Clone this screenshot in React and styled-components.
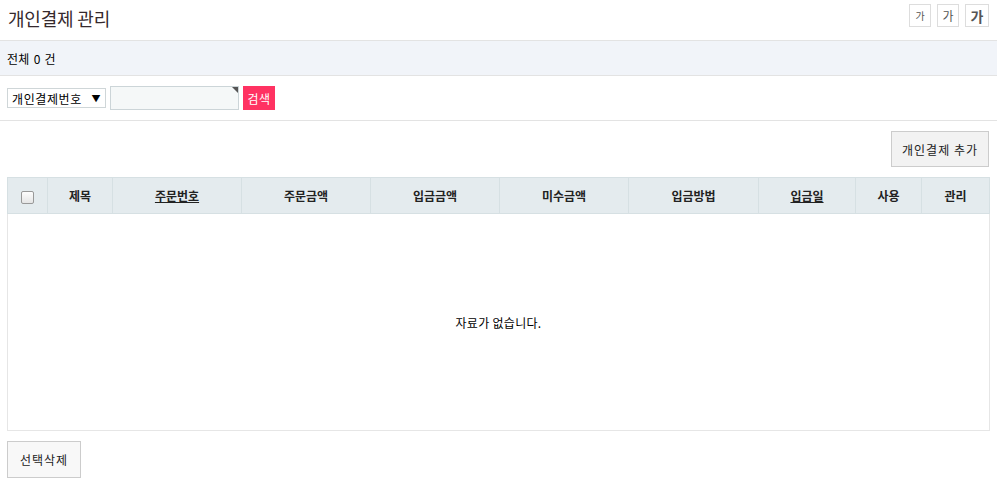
import React from "react";
import styled, { createGlobalStyle } from "styled-components";

const GlobalStyle = createGlobalStyle`
  html, body {
    margin: 0;
    padding: 0;
    background: #fff;
    font-family: "Noto Sans CJK KR", "Noto Sans", sans-serif;
    font-size: 12px;
    color: #000;
  }
`;

const Page = styled.div`
  width: 997px;
  display: flex;
  flex-direction: column;
`;

const TitleBar = styled.div`
  height: 41px;
  box-sizing: border-box;
  border-bottom: 1px solid #e3e3e3;
  display: flex;
  align-items: center;
  justify-content: space-between;
  padding: 0 8px 0 8px;
`;

const Title = styled.h1`
  margin: 0;
  font-size: 18px;
  font-weight: normal;
  color: #35292d;
  letter-spacing: -0.2px;
  line-height: 20px;
  margin-top: -4px;
`;

const SizeGroup = styled.div`
  display: flex;
  gap: 6px;
  align-self: flex-start;
  margin-top: 4px;
`;

const SizeButton = styled.button`
  width: ${p => p.w}px;
  height: 23px;
  padding: 0;
  border: 1px solid #ddd;
  background: #fff;
  color: #555;
  font-family: inherit;
  font-size: ${p => p.fs}px;
  font-weight: ${p => (p.bold ? 600 : "normal")};
  display: flex;
  align-items: center;
  justify-content: center;
`;

const TotalBar = styled.div`
  height: 35px;
  box-sizing: border-box;
  background: #f1f4f9;
  border-bottom: 1px solid #e3e3e3;
  display: flex;
  align-items: center;
  padding-left: 7px;
  font-size: 12px;
  letter-spacing: 0.3px;
  word-spacing: 1px;
`;

const SearchRow = styled.div`
  height: 45px;
  box-sizing: border-box;
  border-bottom: 1px solid #e3e3e3;
  display: flex;
  align-items: center;
  padding-left: 7px;
`;

const Select = styled.div`
  width: 99px;
  height: 20px;
  box-sizing: border-box;
  border: 1px solid #cfd6d8;
  display: flex;
  align-items: center;
  justify-content: space-between;
  padding: 0 4px 0 4px;
  font-size: 12px;
  letter-spacing: 0.6px;
  background: #fff;
`;

const Arrow = styled.span`
  font-size: 9px;
`;

const InputBox = styled.div`
  position: relative;
  width: 129px;
  height: 24px;
  box-sizing: border-box;
  margin-left: 4px;
  border: 1px solid #ccd5d8;
  background: #f5f8f8;
`;

const Corner = styled.span`
  position: absolute;
  top: 0;
  right: 0;
  width: 0;
  height: 0;
  border-top: 6px solid #555;
  border-left: 6px solid transparent;
`;

const SearchButton = styled.button`
  margin-left: 4px;
  width: 32px;
  height: 24px;
  padding: 0;
  border: none;
  background: #ff3262;
  color: #fff;
  font-family: inherit;
  font-size: 12px;
  letter-spacing: 0.5px;
`;

const ActionRow = styled.div`
  display: flex;
  justify-content: ${p => p.align || "flex-end"};
  padding: ${p => p.pt}px 8px ${p => p.pb}px 7px;
`;

const GrayButton = styled.button`
  height: ${p => p.h}px;
  width: ${p => p.w}px;
  padding: 0;
  border: 1px solid #cccccc;
  background: ${p => p.bg};
  font-family: inherit;
  font-size: 12px;
  letter-spacing: 1px;
  color: #222;
`;

const TableWrap = styled.div`
  margin: 0 8px 0 7px;
`;

const Table = styled.table`
  width: 100%;
  border-collapse: collapse;
  table-layout: fixed;
  border: 1px solid #d6e0e3;
`;

const Th = styled.th`
  height: 35px;
  background: #e4ebee;
  border: 1px solid #d6e0e3;
  font-size: 12px;
  font-weight: bold;
  color: #222;
  padding: 0;
  text-decoration: ${p => (p.link ? "underline" : "none")};
`;

const EmptyCell = styled.td`
  height: 214px;
  text-align: center;
  font-size: 12px;
  letter-spacing: 0.3px;
  border: 1px solid #e6e6e6;
`;

const Check = styled.span`
  display: inline-block;
  width: 11px;
  height: 11px;
  border: 1px solid #999;
  border-radius: 2px;
  background: linear-gradient(#fdfdfd, #e5e5e5);
  vertical-align: middle;
`;

const columns = [
  { w: 40, label: null },
  { w: 65, label: "제목" },
  { w: 129, label: "주문번호", link: true },
  { w: 129, label: "주문금액" },
  { w: 129, label: "입금금액" },
  { w: 129, label: "미수금액" },
  { w: 130, label: "입금방법" },
  { w: 97, label: "입금일", link: true },
  { w: 66, label: "사용" },
  { w: 68, label: "관리" }
];

export default function App() {
  return (
    <Page>
      <GlobalStyle />
      <TitleBar>
        <Title>개인결제 관리</Title>
        <SizeGroup>
          <SizeButton w={22} fs={10}>가</SizeButton>
          <SizeButton w={22} fs={12}>가</SizeButton>
          <SizeButton w={24} fs={14} bold>가</SizeButton>
        </SizeGroup>
      </TitleBar>
      <TotalBar>전체 0 건</TotalBar>
      <SearchRow>
        <Select>
          <span>개인결제번호</span>
          <Arrow>▼</Arrow>
        </Select>
        <InputBox>
          <Corner />
        </InputBox>
        <SearchButton>검색</SearchButton>
      </SearchRow>
      <ActionRow pt={10} pb={10}>
        <GrayButton h={36} w={98} bg="#f2f2f2">개인결제 추가</GrayButton>
      </ActionRow>
      <TableWrap>
        <Table>
          <colgroup>
            {columns.map((c, i) => (
              <col key={i} style={{ width: c.w }} />
            ))}
          </colgroup>
          <thead>
            <tr>
              {columns.map((c, i) => (
                <Th key={i} link={c.link}>
                  {c.label === null ? <Check /> : c.label}
                </Th>
              ))}
            </tr>
          </thead>
          <tbody>
            <tr>
              <EmptyCell colSpan={columns.length}>자료가 없습니다.</EmptyCell>
            </tr>
          </tbody>
        </Table>
      </TableWrap>
      <ActionRow align="flex-start" pt={10} pb={5}>
        <GrayButton h={37} w={74} bg="#f8f8f8">선택삭제</GrayButton>
      </ActionRow>
    </Page>
  );
}
